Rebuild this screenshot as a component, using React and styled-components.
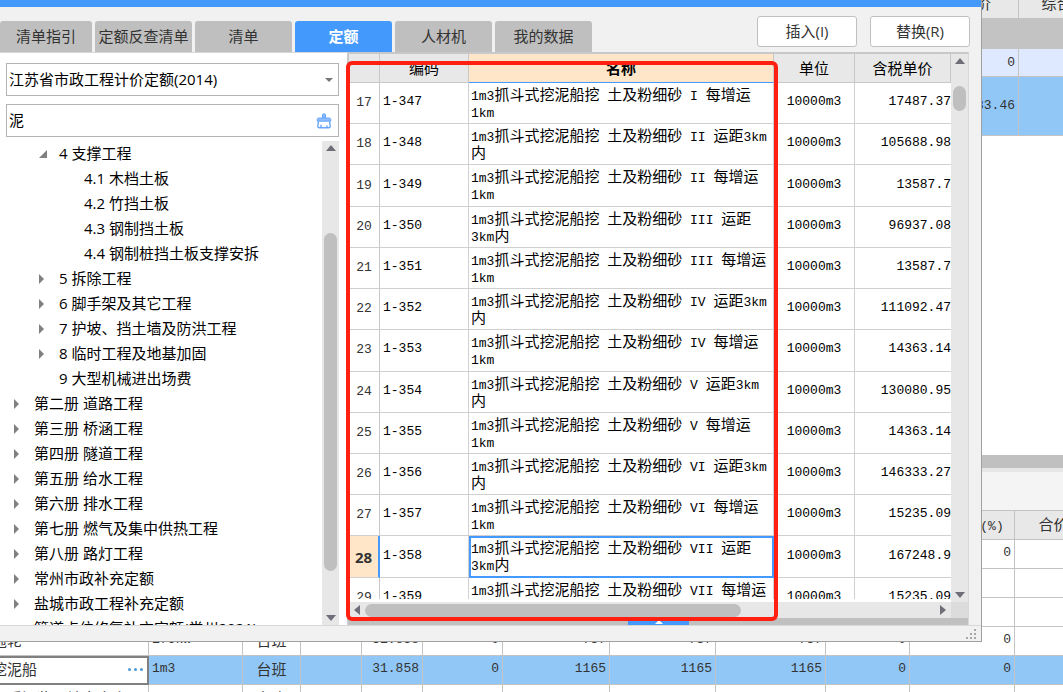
import React from 'react'
import styled, { createGlobalStyle } from 'styled-components'

const tabs = ['清单指引', '定额反查清单', '清单', '定额', '人材机', '我的数据']

const tree = [
  { level: 1, arrow: 'open', text: '4 支撑工程' },
  { level: 2, text: '4.1 木档土板' },
  { level: 2, text: '4.2 竹挡土板' },
  { level: 2, text: '4.3 钢制挡土板' },
  { level: 2, text: '4.4 钢制桩挡土板支撑安拆' },
  { level: 1, arrow: 'closed', text: '5 拆除工程' },
  { level: 1, arrow: 'closed', text: '6 脚手架及其它工程' },
  { level: 1, arrow: 'closed', text: '7 护坡、挡土墙及防洪工程' },
  { level: 1, arrow: 'closed', text: '8 临时工程及地基加固' },
  { level: 1, text: '9 大型机械进出场费' },
  { level: 0, arrow: 'closed', text: '第二册 道路工程' },
  { level: 0, arrow: 'closed', text: '第三册 桥涵工程' },
  { level: 0, arrow: 'closed', text: '第四册 隧道工程' },
  { level: 0, arrow: 'closed', text: '第五册 给水工程' },
  { level: 0, arrow: 'closed', text: '第六册 排水工程' },
  { level: 0, arrow: 'closed', text: '第七册 燃气及集中供热工程' },
  { level: 0, arrow: 'closed', text: '第八册 路灯工程' },
  { level: 0, arrow: 'closed', text: '常州市政补充定额' },
  { level: 0, arrow: 'closed', text: '盐城市政工程补充定额' },
  { level: 0, text: '管道点位修复补充定额(常州2021)' },
]

const prefix = '1m3抓斗式挖泥船挖 土及粉细砂 '

const quotas = [
  [17, '1-347', 'I 每增运\n1km', '17487.37'],
  [18, '1-348', 'II 运距3km\n内', '105688.98'],
  [19, '1-349', 'II 每增运\n1km', '13587.7'],
  [20, '1-350', 'III 运距\n3km内', '96937.08'],
  [21, '1-351', 'III 每增运\n1km', '13587.7'],
  [22, '1-352', 'IV 运距3km\n内', '111092.47'],
  [23, '1-353', 'IV 每增运\n1km', '14363.14'],
  [24, '1-354', 'V 运距3km\n内', '130080.95'],
  [25, '1-355', 'V 每增运\n1km', '14363.14'],
  [26, '1-356', 'VI 运距3km\n内', '146333.27'],
  [27, '1-357', 'VI 每增运\n1km', '15235.09'],
  [28, '1-358', 'VII 运距\n3km内', '167248.9'],
  [29, '1-359', 'VII 每增运\n1km', '15235.09'],
]

const machineRows = [
  ['', '', '', '', '', '', '', '', '0'],
  ['', '', '', '', '', '', '', '', ''],
  ['', '', '', '', '', '', '', '', ''],
  ['拖轮', '176kW', '台班', '31.858', '0', '737', '737', '737', '0', '0'],
  ['挖泥船', '1m3', '台班', '31.858', '0', '1165', '1165', '1165', '0', '0'],
  ['硬质泥浆运输立方米', '', '台班', '63.716', '0', '319.48', '319.48', '319.48', '0', '0'],
]

const machineCols = [160, 94, 58, 61, 61, 80, 107, 106, 110, 84, 105, 78]

// latin runs are set narrower than the chinese glyphs beside them
const Mixed = ({ children }) =>
  children.split(/([ -~]+)/).map((part, i) => (i % 2 ? <Latin key={i}>{part}</Latin> : part))

const ArrowUp = () => (
  <svg width="10" height="6" viewBox="0 0 10 6"><path d="M5 0L10 6H0z" fill="#6e6e78" /></svg>
)
const ArrowDown = () => (
  <svg width="10" height="6" viewBox="0 0 10 6"><path d="M0 0H10L5 6z" fill="#6e6e78" /></svg>
)
const ArrowLeft = () => (
  <svg width="6" height="10" viewBox="0 0 6 10"><path d="M6 0V10L0 5z" fill="#6e6e78" /></svg>
)
const ArrowRight = () => (
  <svg width="6" height="10" viewBox="0 0 6 10"><path d="M0 0L6 5L0 10z" fill="#6e6e78" /></svg>
)

const TreeArrow = ({ kind }) => (
  <svg width="10" height="10" viewBox="0 0 10 10">
    {kind === 'open' && <path d="M8 1V9H0z" fill="#808080" />}
    {kind === 'closed' && <path d="M0 0L5 5L0 10z" fill="#808080" />}
  </svg>
)

const BroomIcon = () => (
  <svg width="16" height="16" viewBox="0 0 16 16" fill="none" stroke="#66a6fa">
    <path d="M6.5 5V2Q6.5 0.8 8 0.8T9.5 2V5z" fill="#8dbdfd" />
    <path d="M1.2 8.2V6.5Q1.2 5 3 5H13Q14.8 5 14.8 6.5V8.2z" fill="#8dbdfd" />
    <path d="M2.4 8.5L1.8 13.2Q1.8 14.8 3.4 14.8H12.6Q14.2 14.8 14.2 13.2L13.6 8.5M5 14.5V11.8M11 14.5V12.4" strokeWidth="1.4" />
  </svg>
)

const App = () => {
  return (
    <Screen>
      <Global />
      <TopPane>
        <PriceTable>
          <colgroup>
            <col />
            <Col $w={100} />
            <Col $w={106} />
          </colgroup>
          <thead>
            <tr>
              <BackHead />
              <BackHead>市场价</BackHead>
              <BackHead>综合单价</BackHead>
            </tr>
          </thead>
          <tbody>
            <PriceRow $h={30} $bg="#c3c3c3"><PriceCell /><PriceCell /><PriceCell /></PriceRow>
            <PriceRow $h={28} $bg="#dee9ff"><PriceCell /><PriceCell>0</PriceCell><PriceCell /></PriceRow>
            <PriceRow $h={59} $bg="#91c7f6"><PriceCell /><PriceCell>19983.46</PriceCell><PriceCell /></PriceRow>
          </tbody>
        </PriceTable>
      </TopPane>
      <Splitter />
      <BottomBar />
      <BottomPane>
        <MachineTable>
          <colgroup>
            {machineCols.map((w, i) => <Col key={i} $w={w} />)}
          </colgroup>
          <thead>
            <tr>
              {machineCols.slice(0, 10).map((w, i) => <BackHead key={i} />)}
              <BackHead>计算基数<Latin>(%)</Latin></BackHead>
              <BackHead>合价</BackHead>
            </tr>
          </thead>
          <tbody>
            {machineRows.map((row, r) => (
              <MachineRow key={r} $active={r === 4}>
                <NameCell $active={r === 4}>
                  <NameFlex>
                    {row[0]}
                    {r === 4 && <More type="button" aria-label="更多"><i /><i /><i /></More>}
                  </NameFlex>
                </NameCell>
                <MachineCell $align="left">{row[1]}</MachineCell>
                <MachineCell $align="center" $cjk>{row[2]}</MachineCell>
                <MachineCell />
                <MachineCell>{row[3]}</MachineCell>
                <MachineCell>{row[4]}</MachineCell>
                <MachineCell>{row[5]}</MachineCell>
                <MachineCell>{row[6]}</MachineCell>
                <MachineCell>{row[7]}</MachineCell>
                <MachineCell>{r > 2 ? row[8] : ''}</MachineCell>
                <MachineCell>{r > 2 ? row[9] : row[8]}</MachineCell>
                <MachineCell />
              </MachineRow>
            ))}
          </tbody>
        </MachineTable>
      </BottomPane>

      <Dialog role="dialog" aria-label="定额">
        <TitleBar />
        <TopBar>
          <Tabs role="tablist">
            {tabs.map((t, i) => (
              <Tab key={t} type="button" role="tab" aria-selected={t === '定额'} $active={t === '定额'} $first={i === 0}>{t}</Tab>
            ))}
          </Tabs>
          <Actions>
            <Action type="button">插入(I)</Action>
            <Action type="button">替换(R)</Action>
          </Actions>
        </TopBar>
        <Body>
          <Side>
            <Fields>
              <Field>
                <Select aria-label="定额库" defaultValue="js">
                  <option value="js">江苏省市政工程计价定额(2014)</option>
                </Select>
                <FieldIcon $w={16}>
                  <svg width="8" height="4" viewBox="0 0 8 4"><path d="M0 0H8L4 4z" fill="#777" /></svg>
                </FieldIcon>
              </Field>
              <Field>
                <Search aria-label="搜索" defaultValue="泥" />
                <FieldIcon $w={26}><BroomIcon /></FieldIcon>
              </Field>
            </Fields>
            <TreeBox>
              <TreeList>
                {tree.map((n) => (
                  <TreeItem key={n.text} $level={n.level}>
                    <TreeArrow kind={n.arrow} />
                    {n.text}
                  </TreeItem>
                ))}
              </TreeList>
              <VBar>
                <ArrowUp />
                <VThumb $before={82} $size={338} />
                <ArrowDown />
              </VBar>
            </TreeBox>
          </Side>
          <GridPanel>
            <GridMain>
              <GridView>
                <QuotaTable>
                  <colgroup>
                    <Col $w={31} />
                    <Col $w={89} />
                    <col />
                    <Col $w={81} />
                    <Col $w={96} />
                  </colgroup>
                  <thead>
                    <tr>
                      <Head />
                      <Head>编码</Head>
                      <Head $active>名称</Head>
                      <Head>单位</Head>
                      <Head>含税单价</Head>
                    </tr>
                  </thead>
                  <tbody>
                    {quotas.map(([no, code, name, price]) => (
                      <tr key={no}>
                        <RowNo $active={no === 28}>{no}</RowNo>
                        <Cell>{code}</Cell>
                        <QuotaName $active={no === 28}><Mixed>{prefix + name}</Mixed></QuotaName>
                        <Cell $align="center">10000m3</Cell>
                        <Cell $align="right">{price}</Cell>
                      </tr>
                    ))}
                  </tbody>
                </QuotaTable>
              </GridView>
              <VBar>
                <ArrowUp />
                <VThumb $before={22} $size={25} />
                <ArrowDown />
              </VBar>
            </GridMain>
            <HBar>
              <ArrowLeft />
              <HTrack><HThumb /></HTrack>
              <ArrowRight />
              <Corner />
            </HBar>
            <Drawer>
              <DrawerHandle type="button" aria-label="展开">
                <svg width="8" height="4" viewBox="0 0 8 4"><path d="M4 0L8 4H0z" fill="#fff" /></svg>
              </DrawerHandle>
            </Drawer>
            <Marker />
          </GridPanel>
        </Body>
        <Footer>
          <svg width="12" height="12" viewBox="0 0 12 12" fill="#a8a8a8">
            <path d="M9 1h2v2H9zM5 5h2v2H5zM9 5h2v2H9zM1 9h2v2H1zM5 9h2v2H5zM9 9h2v2H9z" />
          </svg>
        </Footer>
      </Dialog>
    </Screen>
  )
}

export default App

const ui = `"Open Sans", "Noto Sans CJK SC", sans-serif`
const cjk = `"Noto Sans CJK SC", sans-serif`
const mono = `"Liberation Mono", "Noto Sans CJK SC", monospace`

const Global = createGlobalStyle`
* { box-sizing: border-box; }
body { margin: 0; background: #fff; }
button, input, select { font: inherit; color: inherit; margin: 0; }
table { border-collapse: separate; border-spacing: 0; table-layout: fixed; }
svg { display: block; flex: none; }
`
const Screen = styled.div`
position: relative;
height: 100vh;
overflow: hidden;
display: flex;
flex-direction: column;
font-family: ${cjk};
font-size: 15px;
color: #333;
`
const Latin = styled.span`
font-family: ${mono};
font-size: 13px;
line-height: 8px;
`
const Col = styled.col`
width: ${p => p.$w}px;
`

/* main window */
const TopPane = styled.div`
flex: 1;
min-height: 0;
overflow: hidden;
`
const PriceTable = styled.table`
width: calc(100% + 62px);
margin-top: -10px;
`
const BackHead = styled.th`
height: 29px;
padding: 0 0 2px;
background: #e8e8e8;
border-right: 1px solid #c3c3c3;
border-bottom: 1px solid #c3c3c3;
font-weight: normal;
line-height: 20px;
white-space: nowrap;
`
const PriceRow = styled.tr`
height: ${p => p.$h}px;
background: ${p => p.$bg};
`
const PriceCell = styled.td`
padding: 0 3px;
border-right: 1px solid #c3c3c3;
border-bottom: 1px solid #c3c3c3;
font-family: ${mono};
font-size: 13px;
line-height: 16px;
text-align: right;
`
const Splitter = styled.div`
height: 13px;
background: #c0c0c0;
`
const BottomBar = styled.div`
height: 43px;
background: #f4f4f4;
border-top: 4px solid #e6e6e6;
border-bottom: 1px solid #c3c3c3;
`
const BottomPane = styled.div`
height: 181px;
overflow: hidden;
`
const MachineTable = styled.table`
width: calc(100% + 41px);
margin-left: -11px;
`
const MachineRow = styled.tr`
height: 29px;
background: ${p => p.$active ? '#91c7f6' : '#fff'};
`
const MachineCell = styled.td`
padding: 0 3px 2px;
border-right: 1px solid #c3c3c3;
border-bottom: 1px solid #c3c3c3;
font-family: ${p => p.$cjk ? cjk : mono};
font-size: ${p => p.$cjk ? 15 : 13}px;
line-height: 20px;
text-align: ${p => p.$align || 'right'};
white-space: nowrap;
`
const NameCell = styled.td`
padding: 0 3px 2px;
background: #fff;
border-right: 1px solid #c3c3c3;
border-bottom: 1px solid #c3c3c3;
line-height: 20px;
white-space: nowrap;
${p => p.$active && 'outline: 2px solid #808080; outline-offset: -2px;'}
`
const NameFlex = styled.div`
display: flex;
justify-content: space-between;
align-items: center;
height: 20px;
`
const More = styled.button`
display: flex;
gap: 3px;
padding: 2px;
border: 0;
background: none;
i { width: 3px; height: 3px; border-radius: 2px; background: #4a9ad8; }
`

/* dialog */
const Dialog = styled.div`
position: absolute;
top: 0;
left: 0;
width: calc(100% - 81px);
height: calc(100% - 50px);
display: flex;
flex-direction: column;
background: #f1f1f1;
border-right: 1px solid #a0a0a0;
border-bottom: 1px solid #a0a0a0;
font-family: ${ui};
color: #000;
`
const TitleBar = styled.div`
height: 7px;
flex: none;
background: #4499fd;
`
const TopBar = styled.div`
flex: none;
height: 45px;
display: flex;
justify-content: space-between;
align-items: flex-end;
padding-right: 11px;
`
const Tabs = styled.div`
display: flex;
gap: 3px;
`
const Tab = styled.button`
width: ${p => p.$first ? 92 : 97}px;
height: 31px;
padding: 0 0 2px;
border: 0;
border-radius: 3px 3px 0 0;
background: ${p => p.$active ? '#4499fd' : '#bfbfbf'};
color: ${p => p.$active ? '#fff' : '#333'};
font-weight: ${p => p.$active ? 'bold' : 'normal'};
line-height: 20px;
white-space: nowrap;
`
const Actions = styled.div`
display: flex;
gap: 13px;
padding-bottom: 5px;
`
const Action = styled.button`
width: 100px;
height: 31px;
padding: 0 0 2px;
border: 1px solid #c0c0c0;
border-radius: 3px;
background: #fff;
color: #333;
line-height: 20px;
`
const Body = styled.div`
flex: 1;
min-height: 0;
display: flex;
`
const Side = styled.div`
width: 347px;
flex: none;
display: flex;
flex-direction: column;
gap: 4px;
padding: 10px 8px 0 6px;
background: #fff;
border-top: 1px solid #d8d8d8;
`
const Fields = styled.div`
display: flex;
flex-direction: column;
gap: 8px;
`
const Field = styled.div`
position: relative;
height: 33px;
flex: none;
`
const Select = styled.select`
width: 100%;
height: 100%;
padding: 0 24px 2px 2px;
border: 1px solid #b4b4b4;
border-radius: 0;
appearance: none;
background: #fff;
`
const Search = styled.input`
width: 100%;
height: 100%;
padding: 0 24px 2px 2px;
border: 1px solid #b4b4b4;
background: #fff;
`
const FieldIcon = styled.span`
position: absolute;
top: 0;
right: 2px;
width: ${p => p.$w}px;
height: 100%;
display: flex;
align-items: center;
justify-content: center;
pointer-events: none;
`
const TreeBox = styled.div`
flex: 1;
min-height: 0;
display: flex;
`
const TreeList = styled.ul`
flex: 1;
margin: 0;
padding: 0;
list-style: none;
overflow: hidden;
`
const TreeItem = styled.li`
display: flex;
align-items: center;
gap: 10px;
height: 25px;
padding-left: ${p => 8 + p.$level * 25}px;
line-height: 25px;
white-space: nowrap;
`
const VBar = styled.div`
width: 17px;
flex: none;
display: flex;
flex-direction: column;
align-items: center;
padding: 4px 0;
background: #e7e7e7;
> svg:last-child { margin-top: auto; }
`
const VThumb = styled.div`
width: 13px;
height: ${p => p.$size}px;
margin-top: ${p => p.$before}px;
border-radius: 7px;
background: #bfbfbf;
`
const GridPanel = styled.div`
position: relative;
flex: 1;
min-width: 0;
display: flex;
flex-direction: column;
margin-right: 12px;
border-top: 2px solid #c8c8c8;
border-left: 2px solid #c8c8c8;
border-right: 1px solid #d8d8d8;
background: #fff;
`
const GridMain = styled.div`
flex: 1;
min-height: 0;
display: flex;
`
const GridView = styled.div`
flex: 1;
min-width: 0;
margin-bottom: 3px;
overflow: hidden;
`
const QuotaTable = styled.table`
width: 100%;
height: 565px;
`
const Head = styled.th`
height: 29px;
padding: 0;
background: ${p => p.$active ? '#ffe6c8' : '#e8e8e8'};
border-right: 1px solid #c8c8c8;
border-bottom: 1px solid ${p => p.$active ? '#4499fd' : '#c8c8c8'};
font-family: ${cjk};
font-weight: ${p => p.$active ? 'bold' : 'normal'};
line-height: 20px;
`
const Cell = styled.td`
padding: 0 ${p => p.$align === 'right' ? 0 : 3}px 2px;
border-right: ${p => p.$align === 'right' ? 0 : 1}px solid #d0d0d0;
border-bottom: 1px solid #d0d0d0;
font-family: ${mono};
font-size: 13px;
line-height: 16px;
text-align: ${p => p.$align || 'left'};
`
const RowNo = styled.th`
padding: 0;
border-right: ${p => p.$active ? '2px solid #4499fd' : '1px solid #c8c8c8'};
border-bottom: 1px solid #d0d0d0;
background: ${p => p.$active ? '#ffe6c8' : '#fff'};
font-family: ${p => p.$active ? ui : mono};
font-size: ${p => p.$active ? 15 : 13}px;
font-weight: ${p => p.$active ? 'bold' : 'normal'};
color: #333;
line-height: 16px;
`
const QuotaName = styled.td`
padding: 2px 0 0 2px;
border-right: 1px solid #d0d0d0;
border-bottom: 1px solid #d0d0d0;
font-family: ${cjk};
line-height: 17px;
vertical-align: top;
white-space: pre;
${p => p.$active && 'outline: 2px solid #4499fd; outline-offset: -2px;'}
`
const HBar = styled.div`
height: 16px;
flex: none;
display: flex;
align-items: center;
gap: 5px;
padding-left: 5px;
background: #e7e7e7;
`
const HTrack = styled.div`
flex: 1;
`
const HThumb = styled.div`
width: 66%;
height: 13px;
border-radius: 7px;
background: #bfbfbf;
`
const Corner = styled.div`
width: 17px;
height: 16px;
background: #dcdcdc;
`
const Drawer = styled.div`
height: 7px;
flex: none;
display: flex;
justify-content: center;
background: #c0c0c0;
`
const DrawerHandle = styled.button`
width: 61px;
height: 7px;
display: flex;
justify-content: center;
align-items: center;
padding: 0;
border: 0;
background: #4499fd;
`
const Marker = styled.div`
position: absolute;
top: 7px;
left: -3px;
right: 190px;
bottom: 4px;
border: 4px solid #ff2012;
border-radius: 6px;
pointer-events: none;
`
const Footer = styled.div`
height: 16px;
flex: none;
display: flex;
justify-content: flex-end;
align-items: center;
padding-right: 4px;
border-top: 1px solid #d8d8d8;
`
